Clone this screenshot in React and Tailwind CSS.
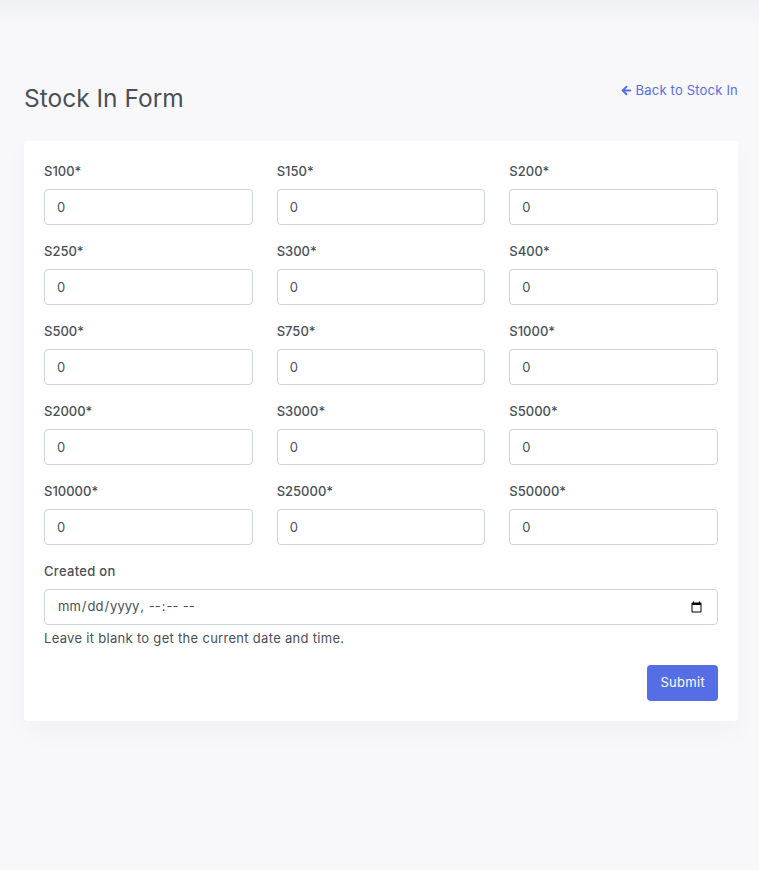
import { ArrowLeft } from 'lucide-react';

const sizes = [
	'S100', 'S150', 'S200',
	'S250', 'S300', 'S400',
	'S500', 'S750', 'S1000',
	'S2000', 'S3000', 'S5000',
	'S10000', 'S25000', 'S50000',
];

const inputClass =
	'block h-[36px] w-full rounded-[4px] border border-[#ced4da] bg-white px-3 text-[13px] text-[#495057] outline-none focus:border-[#b1bbc4]';

function SizeField({ name }) {
	return (
		<div className="mb-4">
			<label className="mb-2 block text-[13px] font-medium leading-[20px] text-[#495057]">{name}*</label>
			<input type="number" defaultValue="0" className={inputClass} />
		</div>
	);
}

export default function App() {
	return (
		<div
			className="min-h-[870px] bg-[#f8f8fb] text-[13px] text-[#495057]"
			style={{ fontFamily: 'Inter, "Open Sans", sans-serif' }}
		>
			<div className="h-[24px] bg-[linear-gradient(180deg,rgba(18,38,63,0.035)_0%,rgba(18,38,63,0)_100%)]" />

			<div className="pl-6 pr-[21px] pt-[56px] pb-10">
				<div className="mb-[25px] flex items-start justify-between">
					<h3 className="text-[24.5px] font-normal leading-[36px] text-[#495057]">Stock In Form</h3>
					<a
						href="#"
						className="mt-[1px] flex items-center gap-[3px] text-[13px] leading-[19.5px] tracking-[0.2px] text-[#556ee6]"
					>
						<ArrowLeft className="h-[13px] w-[13px]" strokeWidth={3.5} />
						Back to Stock In
					</a>
				</div>

				<div className="rounded-[4px] bg-white p-5 shadow-[0_12px_24px_rgba(18,38,63,0.03)]">
					<div className="grid grid-cols-3 gap-x-6">
						{sizes.map((name) => (
							<SizeField key={name} name={name} />
						))}
					</div>

					<div className="mb-4">
						<label className="mb-2 block text-[13px] font-medium leading-[20px] tracking-[0.3px] text-[#495057]">
							Created on
						</label>
						<input type="datetime-local" className={inputClass} />
						<div className="mt-1 text-[13px] leading-[19.5px] tracking-[0.3px] text-[#495057]">
							Leave it blank to get the current date and time.
						</div>
					</div>

					<div className="flex justify-end">
						<button
							type="button"
							className="h-[36px] rounded-[4px] bg-[#556ee6] px-[13px] text-[13px] leading-[19.5px] tracking-[0.3px] text-white"
						>
							Submit
						</button>
					</div>
				</div>
			</div>
		</div>
	);
}
